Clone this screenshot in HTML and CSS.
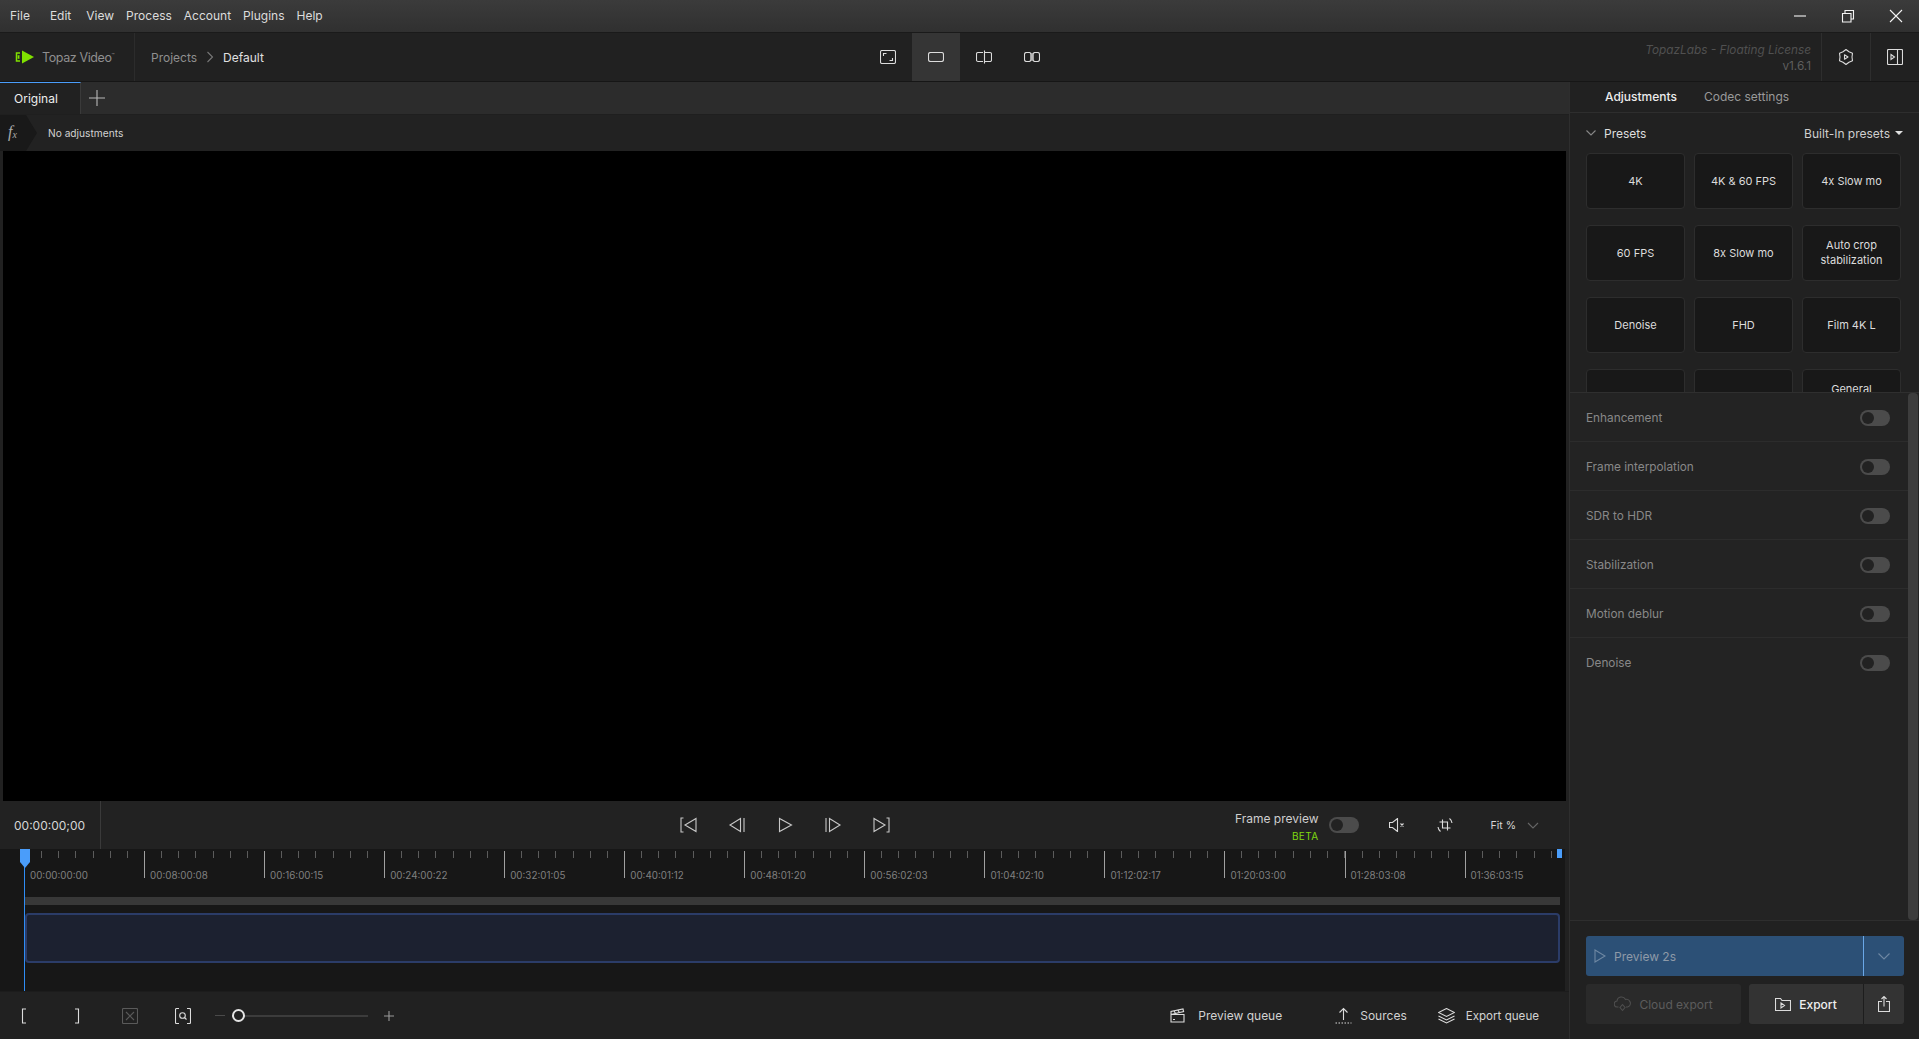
FILE: index.html
```html
<!DOCTYPE html>
<html lang="en">

<head>
    <meta charset="UTF-8">
    <title>Topaz Video</title>
    <link rel="stylesheet" href="styles.css">
</head>

<body>
    <!-- title bar -->
    <div class="titlebar">
        <div class="menu">
            <span class="menu-first">File</span>
            <span class="menu-edit">Edit</span>
            <span>View</span>
            <span>Process</span>
            <span>Account</span>
            <span>Plugins</span>
            <span>Help</span>
        </div>
        <div class="win-btns">
            <svg width="14" height="14" viewBox="0 0 14 14"><path d="M1 7h12" /></svg>
            <svg width="14" height="14" viewBox="0 0 14 14"><path d="M1.500 4.500h8.500v8.500h-8.500zM4 4.500v-3h8.500v8.500h-2.500" /></svg>
            <svg width="14" height="14" viewBox="0 0 14 14"><path d="M1 1l12 12M13 1l-12 12" /></svg>
        </div>
    </div>

    <!-- tool bar -->
    <div class="toolbar">
        <div class="toolbar-left">
            <div class="logo">
                <svg width="20" height="14" viewBox="0 0 20 14">
                    <path d="M7 0.500l12 6.500l-12 6.500z" fill="#80e000" stroke="none" />
                    <path d="M5 3h-3.500v8h3.500M4.500 6h-1v2h1" fill="none" stroke="#80e000" stroke-width="1.500" />
                </svg>
                <span class="logo-text">Topaz Video<span class="logo-tm">™</span></span>
            </div>
            <div class="crumbs">
                <span>Projects</span>
                <svg width="8" height="12" viewBox="0 0 8 12"><path d="M1.500 1l5 5l-5 5" /></svg>
                <span class="crumb-current">Default</span>
            </div>
        </div>
        <div class="view-btns">
            <div class="view-btn">
                <svg width="16" height="14" viewBox="0 0 16 14"><rect x="0.500" y="0.500" width="15" height="13" rx="1.500" /><path d="M3.500 6v-2.500h3M12.500 8v2.500h-3" /></svg>
            </div>
            <div class="view-btn view-btn-on">
                <svg width="16" height="10" viewBox="0 0 16 10"><rect x="0.500" y="0.500" width="15" height="9" rx="2" /></svg>
            </div>
            <div class="view-btn">
                <svg width="16" height="14" viewBox="0 0 16 14"><path d="M7 2.500h-5a1.500 1.500 0 0 0-1.500 1.500v6a1.500 1.500 0 0 0 1.500 1.500h5M9 2.500h5a1.500 1.500 0 0 1 1.500 1.500v6a1.500 1.500 0 0 1-1.500 1.500h-5M8.500 0.500v13" /></svg>
            </div>
            <div class="view-btn">
                <svg width="16" height="10" viewBox="0 0 16 10"><rect x="6.500" y="1" width="3" height="8" fill="#8a8a8a" stroke="none" /><rect x="0.500" y="0.500" width="6.500" height="9" rx="2" /><rect x="9" y="0.500" width="6.500" height="9" rx="2" /></svg>
            </div>
        </div>
        <div class="toolbar-right">
            <div class="license">
                <div class="license-name">TopazLabs - Floating License</div>
                <div>v1.6.1</div>
            </div>
            <div class="tool-btn">
                <svg class="gear-icon" width="16" height="16" viewBox="0 0 16 16"><path d="M8 0.500l3 2.300 3.500 1.450-.5 3.750.5 3.750-3.500 1.450-3 2.300-3-2.300-3.500-1.450.5-3.750-.5-3.750 3.500-1.450z" /><path d="M6.500 5.800l3.500 2.200-3.500 2.200z" /></svg>
            </div>
            <div class="tool-btn">
                <svg width="16" height="16" viewBox="0 0 16 16"><rect x="0.500" y="0.500" width="15" height="15" rx="1" /><path d="M10.500 0.500v15M4 5.500l3.500 2.500-3.500 2.500z" /></svg>
            </div>
        </div>
    </div>

    <div class="main">
        <!-- left side -->
        <div class="left">
            <div class="tabs">
                <div class="tab">Original</div>
                <div class="tab-add">
                    <svg width="16" height="16" viewBox="0 0 16 16"><path d="M8 0v16M0 8h16" /></svg>
                </div>
            </div>
            <div class="fx-row">
                <div class="fx-badge"><i>f</i><span class="fx-x">x</span></div>
                <span>No adjustments</span>
            </div>
            <div class="video"></div>

            <div class="playbar">
                <div class="timecode">00:00:00;00</div>
                <div class="transport">
                    <svg width="18" height="16" viewBox="0 0 18 16"><path d="M3.500 1h-2.500v14h2.500M16 1.500v13l-11-6.500z" /></svg>
                    <svg width="18" height="16" viewBox="0 0 18 16"><path d="M12.500 1.500v13l-10.500-6.500zM16 1v14" /></svg>
                    <svg width="18" height="16" viewBox="0 0 18 16"><path d="M3.500 1.500v13l12-6.500z" /></svg>
                    <svg width="18" height="16" viewBox="0 0 18 16"><path d="M5.500 1.500v13l10.500-6.500zM2 1v14" /></svg>
                    <svg width="18" height="16" viewBox="0 0 18 16"><path d="M14.500 1h2.500v14h-2.500M2 1.500v13l11-6.500z" /></svg>
                </div>
                <div class="play-right">
                    <div class="frame-preview">
                        <div>Frame preview</div>
                        <div class="beta">BETA</div>
                    </div>
                    <div class="toggle"></div>
                    <svg class="mute-icon" width="16" height="14" viewBox="0 0 16 14"><path d="M0.500 4.500h3l5-4v13l-5-4h-3zM11.500 5.500l3 3M14.500 5.500l-3 3" /></svg>
                    <svg class="crop-icon" width="16" height="16" viewBox="0 0 16 16"><path d="M5.500 2.500v8.500h8M2.500 5h8v8.500M1 10a7 7 0 0 0 2.500 4.500M15 6a7 7 0 0 0-2.500-4.500" /></svg>
                    <span class="fit">Fit %</span>
                    <svg class="fit-chevron" width="12" height="7" viewBox="0 0 12 7"><path d="M1 1l5 5l5-5" /></svg>
                </div>
            </div>

            <!-- timeline -->
            <div class="timeline">
                <div class="ruler">
                    <div class="ruler-cell">00:00:00:00</div>
                    <div class="ruler-cell">00:08:00:08</div>
                    <div class="ruler-cell">00:16:00:15</div>
                    <div class="ruler-cell">00:24:00:22</div>
                    <div class="ruler-cell">00:32:01:05</div>
                    <div class="ruler-cell">00:40:01:12</div>
                    <div class="ruler-cell">00:48:01:20</div>
                    <div class="ruler-cell">00:56:02:03</div>
                    <div class="ruler-cell">01:04:02:10</div>
                    <div class="ruler-cell">01:12:02:17</div>
                    <div class="ruler-cell">01:20:03:00</div>
                    <div class="ruler-cell">01:28:03:08</div>
                    <div class="ruler-cell ruler-last">01:36:03:15</div>
                </div>
                <div class="track-bar"></div>
                <div class="clip"></div>
                <div class="playhead"></div>
                <svg class="playhead-top" width="10" height="19" viewBox="0 0 10 19"><path d="M0 0h10v13l-5 6l-5-6z" fill="#4a9dfa" /></svg>
                <div class="end-mark"></div>
            </div>

            <div class="bottombar">
                <div class="bottom-tools">
                    <svg class="icon-open" width="6" height="16" viewBox="0 0 6 16"><path d="M5 1h-3.500v14h3.500" /></svg>
                    <svg class="icon-close" width="6" height="16" viewBox="0 0 6 16"><path d="M1 1h3.500v14h-3.500" /></svg>
                    <svg class="icon-clear" width="16" height="16" viewBox="0 0 16 16"><rect x="0.500" y="0.500" width="15" height="15" rx="1" /><path d="M4 4l8 8M12 4l-8 8" /></svg>
                    <svg class="icon-zoom" width="16" height="16" viewBox="0 0 16 16"><path d="M4 0.500h-2.500a1 1 0 0 0-1 1v13a1 1 0 0 0 1 1h2.500M12 0.500h2.500a1 1 0 0 1 1 1v13a1 1 0 0 1-1 1h-2.500" /><circle cx="7.500" cy="7.500" r="2.800" /><path d="M9.500 9.500l2 2" /></svg>
                    <div class="zoom-minus"></div>
                    <div class="zoom-slider"><div class="zoom-thumb"></div></div>
                    <svg class="icon-plus" width="10" height="10" viewBox="0 0 10 10"><path d="M5 0v10M0 5h10" /></svg>
                </div>
                <div class="queue-btns">
                    <div class="queue-btn queue-preview">
                        <svg width="15" height="15" viewBox="0 0 15 15"><path d="M1 6.500h13v7.500h-13zM1 6.500v-3l12-2.500.6 2.500-12.600 3M4 3l1.500 2.500M8 2.200l1.500 2.500M3 11.500h2" /></svg>
                        <span>Preview queue</span>
                    </div>
                    <div class="queue-btn queue-sources">
                        <svg width="17" height="17" viewBox="0 0 17 17"><path d="M8.500 13v-11.500M4.500 5.500l4-4 4 4" /><path d="M0.500 16h16" stroke-dasharray="1.500 1.500" /></svg>
                        <span>Sources</span>
                    </div>
                    <div class="queue-btn queue-export">
                        <svg width="17" height="16" viewBox="0 0 17 16"><path d="M8.500 0.500l8 4-8 4-8-4zM0.500 8l8 4 8-4M0.500 11l8 4 8-4" /></svg>
                        <span>Export queue</span>
                    </div>
                </div>
            </div>
        </div>

        <!-- right panel -->
        <div class="panel">
            <div class="panel-tabs">
                <span class="panel-tab-on">Adjustments</span>
                <span>Codec settings</span>
            </div>
            <div class="presets">
                <div class="presets-head">
                    <div class="presets-title">
                        <svg width="10" height="6" viewBox="0 0 10 6"><path d="M0.500 0.500l4.500 4.500l4.500-4.500" /></svg>
                        <span>Presets</span>
                    </div>
                    <div class="presets-select">Built-In presets <span class="caret"></span></div>
                </div>
                <div class="preset-grid">
                    <div class="preset">4K</div>
                    <div class="preset">4K &amp; 60 FPS</div>
                    <div class="preset">4x Slow mo</div>
                    <div class="preset">60 FPS</div>
                    <div class="preset">8x Slow mo</div>
                    <div class="preset">Auto crop<br>stabilization</div>
                    <div class="preset">Denoise</div>
                    <div class="preset">FHD</div>
                    <div class="preset">Film 4K L</div>
                    <div class="preset"></div>
                    <div class="preset"></div>
                    <div class="preset">General<br>purpose</div>
                </div>
            </div>
            <div class="adjust">
                <div class="adjust-list">
                    <div class="adjust-row"><span>Enhancement</span><div class="toggle"></div></div>
                    <div class="adjust-row"><span>Frame interpolation</span><div class="toggle"></div></div>
                    <div class="adjust-row"><span>SDR to HDR</span><div class="toggle"></div></div>
                    <div class="adjust-row"><span>Stabilization</span><div class="toggle"></div></div>
                    <div class="adjust-row"><span>Motion deblur</span><div class="toggle"></div></div>
                    <div class="adjust-row adjust-last"><span>Denoise</span><div class="toggle"></div></div>
                </div>
                <div class="scrollbar"></div>
            </div>
            <div class="panel-foot">
                <div class="preview-btn">
                    <div class="preview-main">
                        <svg width="12" height="14" viewBox="0 0 12 14"><path d="M1 1v12l10-6z" /></svg>
                        <span>Preview 2s</span>
                    </div>
                    <div class="preview-more">
                        <svg width="12" height="7" viewBox="0 0 12 7"><path d="M0.500 0.500l5.500 5.500l5.500-5.500" /></svg>
                    </div>
                </div>
                <div class="foot-row">
                    <div class="cloud-btn">
                        <svg width="17" height="16" viewBox="0 0 17 16"><path d="M4.500 11h-1a3 3 0 0 1-.5-6 4.500 4.500 0 0 1 8.500-1.500 3.500 3.500 0 0 1 2 7.500h-1.500M8.500 8.500l2.500 3-2.500 3-2.500-3z" /></svg>
                        <span>Cloud export</span>
                    </div>
                    <div class="export-group">
                        <div class="export-btn">
                            <svg width="16" height="13" viewBox="0 0 16 13"><path d="M0.500 12.500v-12h5l1.500 2h8.500v10zM6 5l3.500 2.500-3.500 2.500z" /></svg>
                            <span>Export</span>
                        </div>
                        <div class="share-btn">
                            <svg width="12" height="16" viewBox="0 0 12 16"><path d="M4 5.500h-3.500v10h11v-10h-3.500M6 10.500v-10M3.500 3l2.500-2.500 2.500 2.500" /></svg>
                        </div>
                    </div>
                </div>
            </div>
        </div>
    </div>
</body>

</html>
```
FILE: styles.css
```css
* {
  box-sizing: border-box;
}

html, body {
  height: 100%;
}

body {
  margin: 0;
  overflow: hidden;
  display: flex;
  flex-direction: column;
  background-color: #212121;
  color: #d6d6d6;
  font-family: Inter, "Liberation Sans", sans-serif;
  font-size: 12px;
}

svg {
  display: block;
  flex: none;
  fill: none;
  stroke: #dcdcdc;
  stroke-width: 1.100;
}

/* title bar */
.titlebar {
  height: 32px;
  flex: none;
  display: flex;
  justify-content: space-between;
  align-items: center;
  background: linear-gradient(#3b3b3b, #303030);
  padding-left: 10px;
}

.menu {
  display: flex;
  gap: 12px;
  padding-bottom: 2px;
  font-size: 12px;
  color: #dcdcdc;
}

.menu-first {
  margin-right: 8px;
}

.menu-edit {
  margin-right: 3px;
}

.win-btns {
  display: flex;
  align-items: center;
  gap: 34px;
  padding-right: 16px;
}

.win-btns svg {
  stroke: #f4f4f4;
}

/* tool bar */
.toolbar {
  height: 50px;
  flex: none;
  display: flex;
  background-color: #212121;
  border-top: 1px solid #1a1a1a;
  border-bottom: 1px solid #161616;
}

.toolbar-left {
  flex: 1;
  display: flex;
  align-items: center;
}

.logo {
  width: 135px;
  height: 100%;
  display: flex;
  align-items: center;
  gap: 7px;
  padding-left: 15px;
  border-right: 1px solid #2c2c2c;
}

.logo-text {
  color: #8f8f8f;
  font-size: 12.500px;
  letter-spacing: -0.400px;
  white-space: nowrap;
}

.logo-tm {
  font-size: 5px;
  vertical-align: 5px;
}

.crumbs {
  display: flex;
  align-items: center;
  gap: 9px;
  padding-left: 16px;
  font-size: 12px;
  color: #8f8f8f;
}

.crumbs svg {
  stroke: #777;
}

.crumb-current {
  color: #e0e0e0;
}

.view-btns {
  display: flex;
}

.view-btn {
  width: 48px;
  display: flex;
  align-items: center;
  justify-content: center;
}

.view-btn-on {
  background-color: #353535;
}

.toolbar-right {
  flex: 1;
  display: flex;
  justify-content: flex-end;
}

.license {
  padding: 2px 10px 0 0;
  text-align: right;
  color: #5e5e5e;
  font-size: 11.800px;
  line-height: 16px;
  align-self: center;
}

.license-name {
  font-style: italic;
  color: #505050;
}

.tool-btn {
  width: 49px;
  display: flex;
  align-items: center;
  justify-content: center;
  border-left: 1px solid #2e2e2e;
}

.gear-icon {
  stroke-linejoin: round;
}

/* main area */
.main {
  flex: 1;
  display: flex;
  min-height: 0;
}

.left {
  width: 1570px;
  flex: none;
  display: flex;
  flex-direction: column;
  border-right: 1px solid #2e2e2e;
}

.tabs {
  height: 33px;
  flex: none;
  display: flex;
  background-color: #2c2c2c;
  border-bottom: 1px solid #1f1f1f;
}

.tab {
  width: 81px;
  display: flex;
  align-items: center;
  padding-left: 14px;
  font-size: 12px;
  color: #eee;
  background-color: #212121;
  border-top: 1px solid #4a9dfa;
  border-right: 1px solid #3a3a3a;
}

.tab-add {
  width: 32px;
  display: flex;
  align-items: center;
  justify-content: center;
}

.tab-add svg {
  stroke: #b8b8b8;
}

.fx-row {
  height: 36px;
  flex: none;
  display: flex;
  align-items: center;
  gap: 11px;
  background-color: #222;
  font-size: 10.200px;
  color: #d2d2d2;
}

.fx-badge {
  width: 37px;
  height: 100%;
  display: flex;
  align-items: center;
  padding: 0 0 3px 8px;
  background-color: #191919;
  clip-path: polygon(0 0, 26px 0, 37px 50%, 26px 100%, 0 100%);
  font-family: "Liberation Serif", serif;
  font-size: 16px;
  color: #aaa;
}

.fx-x {
  font-size: 10px;
  font-style: italic;
  padding-top: 6px;
}

.video {
  flex: 1;
  min-height: 0;
  margin: 0 3px;
  background-color: #000;
}

.playbar {
  height: 48px;
  flex: none;
  display: flex;
  align-items: center;
  position: relative;
  background-color: #222;
}

.timecode {
  width: 101px;
  height: 100%;
  display: flex;
  align-items: center;
  padding-left: 14px;
  font-size: 12px;
  color: #d6d6d6;
  border-right: 1px solid #3a3a3a;
}

.transport {
  flex: 1;
  display: flex;
  justify-content: center;
  gap: 30px;
  padding-right: 70px;
}

.transport svg {
  stroke: #c8c8c8;
}

.play-right {
  width: 0;
  display: flex;
  align-items: center;
  justify-content: flex-end;
  margin-right: 30px;
  white-space: nowrap;
}

.frame-preview {
  text-align: right;
  font-size: 12px;
  line-height: 17px;
  margin-right: 10px;
  padding-top: 5px;
  color: #cfcfcf;
}

.beta {
  margin-top: 1px;
  font-size: 10px;
  letter-spacing: 0.400px;
  color: #7ed90f;
}

.toggle {
  width: 30px;
  height: 16px;
  flex: none;
  padding: 2px;
  border-radius: 8px;
  background-color: #4b4b4b;
}

.toggle::before {
  content: "";
  display: block;
  width: 12px;
  height: 12px;
  border-radius: 50%;
  background-color: #222;
}

.mute-icon {
  margin-left: 30px;
}

.crop-icon {
  margin-left: 32px;
}

.fit {
  margin-left: 38px;
  font-size: 10.500px;
}

.fit-chevron {
  margin-left: 11px;
  stroke: #666;
}

/* timeline */
.timeline {
  height: 142px;
  flex: none;
  position: relative;
  overflow: hidden;
  margin-right: 4px;
  background-color: #171717;
}

.ruler {
  height: 48px;
  display: flex;
  padding-left: 24px;
}

.ruler-cell {
  width: 120.050px;
  flex: none;
  padding: 20px 0 0 6px;
  font-size: 9.800px;
  line-height: 13px;
  color: #808080;
  background:
    linear-gradient(#a0a0a0, #a0a0a0) 0 2px / 1px 27px no-repeat,
    repeating-linear-gradient(90deg, #5c5c5c 0 1px, transparent 1px 17.150px) 0 2px / 100% 7px no-repeat;
}

.ruler-last {
  width: 97px;
}

.track-bar {
  height: 8px;
  margin: 0 5px 8px 25px;
  background-color: #383838;
}

.clip {
  height: 50px;
  margin: 0 5px 0 25px;
  border: 2px solid #2b3c68;
  border-radius: 4px;
  background-color: #1c2130;
}

.playhead {
  position: absolute;
  left: 24px;
  top: 0;
  bottom: 0;
  width: 1px;
  background-color: #2f8df5;
}

.playhead-top {
  position: absolute;
  left: 20px;
  top: 0;
  stroke: none;
}

.end-mark {
  position: absolute;
  left: 1557px;
  top: 0;
  width: 5px;
  height: 9px;
  background-color: #4a9dfa;
}

/* bottom bar */
.bottombar {
  height: 48px;
  flex: none;
  display: flex;
  justify-content: space-between;
  align-items: center;
  background-color: #212121;
  border-top: 1px solid #1c1c1c;
}

.bottom-tools {
  display: flex;
  align-items: center;
  padding-left: 21px;
}

.icon-close {
  margin-left: 47px;
}

.icon-clear {
  margin-left: 42px;
  stroke: #5a5a5a;
}

.icon-zoom {
  margin-left: 37px;
}

.zoom-minus {
  width: 10px;
  height: 1px;
  margin-left: 24px;
  background-color: #4a4a4a;
}

.zoom-slider {
  width: 136px;
  height: 2px;
  margin-left: 7px;
  display: flex;
  align-items: center;
  background-color: #3c3c3c;
}

.zoom-thumb {
  width: 13px;
  height: 13px;
  border: 2.500px solid #e4e4e4;
  border-radius: 50%;
  background-color: #212121;
}

.icon-plus {
  margin-left: 16px;
  stroke: #9a9a9a;
}

.queue-btns {
  display: flex;
  align-items: center;
  padding-right: 30px;
  font-size: 12px;
  color: #d2d2d2;
}

.queue-btn {
  display: flex;
  align-items: center;
}

.queue-preview {
  gap: 13px;
}

.queue-sources {
  gap: 8px;
  margin-left: 53px;
}

.queue-export {
  gap: 11px;
  margin-left: 31px;
  font-size: 11.600px;
}

/* right panel */
.panel {
  flex: 1;
  min-width: 0;
  display: flex;
  flex-direction: column;
}

.panel-tabs {
  height: 31px;
  flex: none;
  display: flex;
  align-items: center;
  gap: 27px;
  padding: 0 0 1px 35px;
  font-size: 12px;
  color: #9a9a9a;
  border-bottom: 1px solid #2e2e2e;
}

.panel-tab-on {
  color: #ececec;
  font-weight: 500;
}

.presets {
  height: 279px;
  flex: none;
  overflow: hidden;
  padding: 0 17px 0 16px;
  background-color: #212121;
}

.presets-head {
  height: 40px;
  display: flex;
  justify-content: space-between;
  align-items: center;
  margin-right: -1px;
}

.presets-title {
  display: flex;
  align-items: center;
  gap: 8px;
  font-size: 12px;
  color: #dedede;
}

.presets-title svg {
  stroke: #888;
}

.presets-select {
  display: flex;
  align-items: center;
  gap: 5px;
  font-size: 12px;
  color: #cfcfcf;
}

.caret {
  width: 0;
  height: 0;
  border-left: 4px solid transparent;
  border-right: 4px solid transparent;
  border-top: 4.500px solid #e0e0e0;
}

.preset-grid {
  display: grid;
  grid-template-columns: repeat(3, 99px);
  grid-auto-rows: 56px;
  column-gap: 9px;
  row-gap: 16px;
}

.preset {
  display: flex;
  align-items: center;
  justify-content: center;
  text-align: center;
  font-size: 11px;
  line-height: 15px;
  color: #dcdcdc;
  background-color: #181818;
  border: 1px solid #2d2d2d;
  border-radius: 4px;
}

.adjust {
  flex: 1;
  min-height: 0;
  display: flex;
  background-color: #232323;
  border-top: 1px solid #2f2f2f;
}

.adjust-list {
  flex: 1;
}

.adjust-row {
  height: 49px;
  display: flex;
  justify-content: space-between;
  align-items: center;
  padding: 1px 18px 0 16px;
  font-size: 11.800px;
  color: #888;
  border-bottom: 1px solid #2c2c2c;
}

.adjust-last {
  padding-top: 0;
  border-bottom: none;
}

.scrollbar {
  width: 10px;
  margin-right: 1px;
  background-color: #3d3d3d;
  border-radius: 4px;
}

.panel-foot {
  height: 119px;
  flex: none;
  padding: 15px 15px 0 16px;
  border-top: 1px solid #2e2e2e;
  background-color: #212121;
}

.preview-btn {
  height: 40px;
  display: flex;
  border-radius: 3px;
  background-color: #2c5076;
}

.preview-main {
  flex: 1;
  display: flex;
  align-items: center;
  gap: 8px;
  padding-left: 8px;
  font-size: 12px;
  color: #8e9aa8;
  border-right: 1px solid #6aa8e8;
}

.preview-main svg {
  stroke: #6f88a3;
}

.preview-more {
  width: 40px;
  display: flex;
  align-items: center;
  justify-content: center;
}

.preview-more svg {
  stroke: #6f88a3;
}

.foot-row {
  display: flex;
  gap: 8px;
  margin-top: 8px;
}

.cloud-btn {
  width: 155px;
  height: 40px;
  display: flex;
  align-items: center;
  justify-content: center;
  gap: 8px;
  border-radius: 3px;
  font-size: 12px;
  color: #5c5c5c;
  background-color: #2a2a2a;
}

.cloud-btn svg {
  stroke: #4e4e4e;
}

.export-group {
  flex: 1;
  height: 40px;
  display: flex;
  border-radius: 3px;
  background-color: #333;
}

.export-btn {
  flex: 1;
  display: flex;
  align-items: center;
  justify-content: center;
  gap: 8px;
  font-size: 12px;
  font-weight: 500;
  color: #efefef;
  border-right: 1px solid #1d1d1d;
}

.share-btn {
  width: 40px;
  display: flex;
  align-items: center;
  justify-content: center;
}
```
